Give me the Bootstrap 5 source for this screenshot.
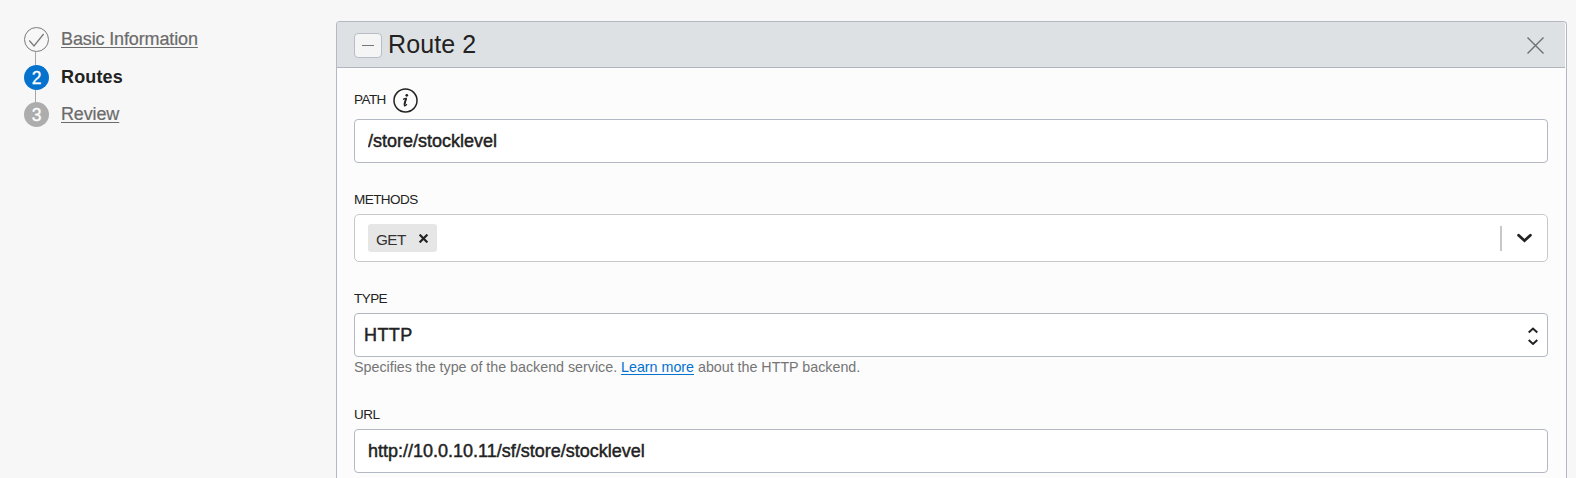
<!DOCTYPE html>
<html lang="en">
<head>
<meta charset="utf-8">
<meta name="viewport" content="width=device-width, initial-scale=1">
<title>Routes</title>
<link href="https://cdn.jsdelivr.net/npm/bootstrap@5.3.0/dist/css/bootstrap.min.css" rel="stylesheet">
<style>
body{font-family:"Liberation Sans",Arial,sans-serif;font-size:18px;line-height:20px;color:#222;background:#f7f7f7;height:478px;overflow:hidden}
svg{display:block;flex:none}
.steps{width:336px;padding:27px 0 0 24px}
.step{height:25px;gap:12px}
.step a,.step .fw-bold{padding-bottom:2px}
.step .fw-bold{letter-spacing:.15px}
.step a{color:#6b6b6b;letter-spacing:-.13px;text-underline-offset:2px;text-decoration-thickness:1px;-webkit-text-stroke:.2px #6b6b6b}
.dot{width:25px;height:25px;color:#fff;flex:none;font-size:17.5px;-webkit-text-stroke:.3px #fff}
.dot-on{background:#0572ce}
.dot-off{background:#adadad}
.joint{width:1px;margin-left:11px;background:#a5a5a5}
.panel{width:1231px;height:457px;margin-top:21px;border:1px solid #b3b8c2;border-bottom:0;border-radius:4px 4px 0 0;background:#fcfcfc}
.panel-head{height:46px;margin-right:1px;border-bottom:1px solid #b0b6be;background:#dee1e4;border-radius:3px 3px 0 0;padding:0 21px 0 17px}
.panel-head h1{font-size:25px;line-height:28px;margin-left:6px;padding-bottom:2px;letter-spacing:.1px}
.fold{width:28px;height:25px;border:1px solid #b7bcc6;border-radius:4px;background:#f5f5f5;margin-top:1px}
.fields{padding:0 18px 0 17px}
.cap{font-size:13.5px;line-height:16px;letter-spacing:-.55px;margin:0}
.form-control.fld,.form-select.fld{height:44px;border:1px solid #b3b8c2;border-radius:4px;font-size:18px;line-height:20px;color:#222;background:#fff;padding:0 13px;-webkit-text-stroke:.45px #222}
.multi{height:48px;border:1px solid #c8c8c8;border-radius:5px;background:#fff;padding:0 14px 0 13px}
.tag{height:28px;border-radius:3px;background:#e6e6e6;padding:0 9px 0 8px;font-size:15.3px;letter-spacing:-.55px;color:#333}
.bar{width:2px;height:25px;background:#c8c8c8}
.hint{font-size:14.3px;line-height:16px;color:#757575;letter-spacing:-.018px}
.hint a{color:#0572ce;text-underline-offset:2px;text-decoration-thickness:1px}
</style>
</head>
<body>
<div class="d-flex">
  <nav class="steps flex-shrink-0">
    <div class="step d-flex align-items-center">
      <svg width="25" height="25" fill="none" stroke="#7a7a7a"><circle cx="12.5" cy="12.5" r="12"/><path d="M5.3 13.5 10 19 19.6 7" stroke-width="1.3"/></svg>
      <a href="#">Basic Information</a>
    </div>
    <div class="joint" style="height:13px"></div>
    <div class="step d-flex align-items-center">
      <span class="dot dot-on rounded-circle d-flex align-items-center justify-content-center">2</span>
      <span class="fw-bold">Routes</span>
    </div>
    <div class="joint" style="height:12px"></div>
    <div class="step d-flex align-items-center">
      <span class="dot dot-off rounded-circle d-flex align-items-center justify-content-center">3</span>
      <a href="#">Review</a>
    </div>
  </nav>
  <main class="panel flex-shrink-0">
    <div class="panel-head d-flex align-items-center">
      <button type="button" class="fold p-0 d-flex align-items-center justify-content-center" aria-label="Collapse"><svg width="12" height="1"><path d="M0 .5h12" stroke="#777"/></svg></button>
      <h1 class="fw-normal mb-0">Route 2</h1>
      <svg class="ms-auto" style="margin-top:2px" width="17" height="17" stroke="#6f6f6f" stroke-width="1.4"><path d="M.5.5l16 16M16.500.5l-16 16"/></svg>
    </div>
    <div class="fields">
      <div class="d-flex align-items-center" style="height:28px;margin-top:18px;margin-bottom:5px">
        <label class="cap" for="path">PATH</label>
        <svg style="margin-left:7px" width="25" height="25" viewBox="0 0 25 25"><circle cx="12.500" cy="12.500" r="11.500" fill="none" stroke="#222" stroke-width="1.5"/><circle cx="13.800" cy="7.300" r="1.350" fill="#222"/><path d="M10.100 11.400q1.300-.9 3.200-1l-1.800 6.200q-.4 1.700.6 1.200.9-.4 1.700-1.600" fill="none" stroke="#222" stroke-width="1.200"/><path d="M12.900 10.800l-1.600 5.900" stroke="#222" stroke-width="1.800"/></svg>
      </div>
      <input id="path" class="form-control fld" value="/store/stocklevel">
      <div class="cap" style="margin-top:29px;margin-bottom:6px">METHODS</div>
      <div class="multi d-flex align-items-center">
        <span class="tag d-flex align-items-center"><span class="pt-1">GET</span><svg style="margin-left:13px" width="9" height="9" stroke="#222" stroke-width="2.200"><path d="M.6.600l7.800 7.800M8.400.600L.6 8.400"/></svg></span>
        <span class="bar ms-auto"></span>
        <svg style="margin-left:15px;margin-right:1px" width="15" height="10" fill="none" stroke="#222" stroke-width="2.800" stroke-linecap="round"><path d="M1.600 2.200 7.500 7.700 13.400 2.200"/></svg>
      </div>
      <div class="cap" style="margin-top:29px;margin-bottom:6px">TYPE</div>
      <div class="form-select fld d-flex align-items-center justify-content-between" style="padding:0 8px 0 9px"><span style="letter-spacing:.4px">HTTP</span>
        <svg style="margin-top:2px" width="12" height="20" fill="none" stroke="#222" stroke-width="2"><path d="M1.700 6.500 6 2.500 10.300 6.500M1.700 14 6 18 10.300 14"/></svg>
      </div>
      <div class="hint" style="margin-top:2px;height:16px">Specifies the type of the backend service. <a href="#">Learn more</a> about the HTTP backend.</div>
      <div class="cap" style="margin-top:32px;margin-bottom:6px">URL</div>
      <input class="form-control fld" value="http://10.0.10.11/sf/store/stocklevel" aria-label="URL">
    </div>
  </main>
</div>
<script src="https://cdn.jsdelivr.net/npm/bootstrap@5.3.0/dist/js/bootstrap.bundle.min.js"></script>
</body>
</html>
